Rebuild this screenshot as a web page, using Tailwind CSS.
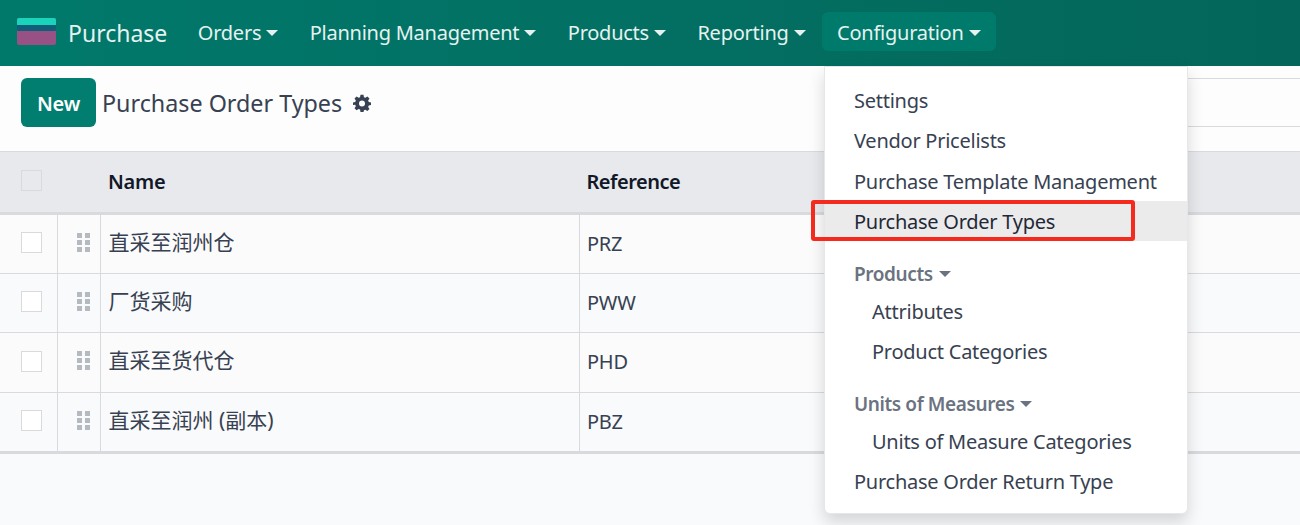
<!DOCTYPE html>
<html lang="en">
<head>
  <meta charset="UTF-8" />
  <title>Purchase Order Types</title>
  <script src="https://cdn.jsdelivr.net/npm/@tailwindcss/browser@4"></script>
</head>
<body class="relative h-[525px] w-[1300px] overflow-hidden bg-[#f9fafb] font-['Noto_Sans','Noto_Sans_CJK_SC',sans-serif] text-[20px] tracking-[-0.25px] text-[#374151]">
  <!-- Navbar -->
  <nav class="flex h-[66px] items-center gap-[1.5px] bg-gradient-to-r from-[#00796b] to-[#04665a] pl-[17px] text-[#e6f2f0]">
    <svg class="mb-[4px] mr-[10.5px] h-[28px] w-[39px]" viewBox="0 0 40 28" preserveAspectRatio="none">
      <path d="M0 3a2 2 0 0 1 2-2h36a2 2 0 0 1 2 2v23a2 2 0 0 1-2 2H2a2 2 0 0 1-2-2z" fill="#985184" />
      <path d="M0 6h40v7a1 1 0 0 1-1 1H1a1 1 0 0 1-1-1z" fill="#0f5f78" />
      <path d="M0 3a2 2 0 0 1 2-2h36a2 2 0 0 1 2 2v5H0z" fill="#1ad3bb" />
    </svg>
    <span class="mr-[14px] text-[23px] tracking-normal">Purchase</span>
    <a class="mb-[3px] flex h-[39px] items-center px-[15px] pt-[3px]">Orders<span class="ml-[5px] border-x-[6px] border-t-[6px] border-x-transparent border-t-current"></span></a>
    <a class="mb-[3px] flex h-[39px] items-center px-[15px] pt-[3px]">Planning Management<span class="ml-[5px] border-x-[6px] border-t-[6px] border-x-transparent border-t-current"></span></a>
    <a class="mb-[3px] flex h-[39px] items-center px-[15px] pt-[3px]">Products<span class="ml-[5px] border-x-[6px] border-t-[6px] border-x-transparent border-t-current"></span></a>
    <a class="mb-[3px] flex h-[39px] items-center px-[15px] pt-[3px]">Reporting<span class="ml-[5px] border-x-[6px] border-t-[6px] border-x-transparent border-t-current"></span></a>
    <a class="mb-[3px] flex h-[39px] items-center rounded-[6px] bg-[#007a6b] px-[15px] pt-[3px]">Configuration<span class="ml-[5px] border-x-[6px] border-t-[6px] border-x-transparent border-t-current"></span></a>
  </nav>

  <!-- Control panel -->
  <div class="flex h-[86px] border-b border-[#d8dadd] bg-[#fdfdfd]">
    <div class="flex items-start pl-[21px] pt-[12px]">
      <button class="h-[49px] w-[75px] rounded-[6px] bg-[#017e6f] pt-[2px] text-[20px] font-semibold text-white">New</button>
      <span class="ml-[6px] mt-[9px] text-[23.3px] leading-[32px] tracking-normal">Purchase Order Types</span>
      <svg class="ml-[11px] mt-[16px] h-[18px] w-[18px]" viewBox="0 0 24 24" fill="#374151">
        <path fill-rule="evenodd" d="M10 1h4l.6 3.200 1.900.8 2.700-1.800 2.800 2.800-1.800 2.700.8 1.900L24 11.200v3.600l-3 .6-.8 1.900 1.800 2.700-2.800 2.800-2.700-1.800-1.900.8L14 24h-4l-.6-3.200-1.900-.8-2.700 1.800L2 19l1.800-2.700-.8-1.900L0 14.800v-3.600l3-.6.8-1.900L2 6l2.800-2.800 2.700 1.800 1.900-.8zM12 8.500a4 4 0 1 0 0 8 4 4 0 0 0 0-8z" />
      </svg>
    </div>
    <div class="ml-auto mt-[12px] h-[49px] w-[113px] border-y border-[#d8dadd]"></div>
  </div>

  <!-- List -->
  <table class="w-full table-fixed border-collapse">
    <colgroup>
      <col class="w-[57px]" />
      <col class="w-[43px]" />
      <col class="w-[479px]" />
      <col />
    </colgroup>
    <thead>
      <tr class="h-[61px] border-b-[3px] border-[#d8dadd] bg-[#e7e9ed] text-left text-[#111827]">
        <th class="pl-[21px]"><span class="mb-[2px] block h-[21px] w-[21px] border border-[#d8dadd]"></span></th>
        <th></th>
        <th class="pl-[8px] font-semibold">Name</th>
        <th class="pl-[7.500px] font-semibold tracking-[-0.5px]">Reference</th>
      </tr>
    </thead>
    <tbody>
      <tr class="h-[60px] border-b border-[#d8dadd] bg-[#fbfbfc]">
        <td class="border-r border-[#d8dadd] pl-[21px]"><span class="mb-[2px] block h-[21px] w-[21px] border border-[#d8dadd] bg-white"></span></td>
        <td class="border-r border-[#d8dadd]"><div class="mb-[3px] ml-[19px] grid w-[13px] grid-cols-2 gap-x-[3px] gap-y-[2px]"><i class="h-[5px] bg-[#b5bac0]"></i><i class="h-[5px] bg-[#b5bac0]"></i><i class="h-[5px] bg-[#b5bac0]"></i><i class="h-[5px] bg-[#b5bac0]"></i><i class="h-[5px] bg-[#b5bac0]"></i><i class="h-[5px] bg-[#b5bac0]"></i></div></td>
        <td class="border-r border-[#d8dadd] pb-[2px] pl-[8px] text-[21px] tracking-normal">直采至润州仓</td>
        <td class="pl-[7.500px]">PRZ</td>
      </tr>
      <tr class="h-[59px] border-b border-[#d8dadd] bg-[#f9fafb]">
        <td class="border-r border-[#d8dadd] pl-[21px]"><span class="mb-[2px] block h-[21px] w-[21px] border border-[#d8dadd] bg-white"></span></td>
        <td class="border-r border-[#d8dadd]"><div class="mb-[3px] ml-[19px] grid w-[13px] grid-cols-2 gap-x-[3px] gap-y-[2px]"><i class="h-[5px] bg-[#b5bac0]"></i><i class="h-[5px] bg-[#b5bac0]"></i><i class="h-[5px] bg-[#b5bac0]"></i><i class="h-[5px] bg-[#b5bac0]"></i><i class="h-[5px] bg-[#b5bac0]"></i><i class="h-[5px] bg-[#b5bac0]"></i></div></td>
        <td class="border-r border-[#d8dadd] pb-[2px] pl-[8px] text-[21px] tracking-normal">厂货采购</td>
        <td class="pl-[7.500px]">PWW</td>
      </tr>
      <tr class="h-[60px] border-b border-[#d8dadd] bg-[#fbfbfc]">
        <td class="border-r border-[#d8dadd] pl-[21px]"><span class="mb-[2px] block h-[21px] w-[21px] border border-[#d8dadd] bg-white"></span></td>
        <td class="border-r border-[#d8dadd]"><div class="mb-[3px] ml-[19px] grid w-[13px] grid-cols-2 gap-x-[3px] gap-y-[2px]"><i class="h-[5px] bg-[#b5bac0]"></i><i class="h-[5px] bg-[#b5bac0]"></i><i class="h-[5px] bg-[#b5bac0]"></i><i class="h-[5px] bg-[#b5bac0]"></i><i class="h-[5px] bg-[#b5bac0]"></i><i class="h-[5px] bg-[#b5bac0]"></i></div></td>
        <td class="border-r border-[#d8dadd] pb-[2px] pl-[8px] text-[21px] tracking-normal">直采至货代仓</td>
        <td class="pl-[7.500px]">PHD</td>
      </tr>
      <tr class="h-[60px] border-b-[3px] border-[#d8dadd] bg-[#f9fafb]">
        <td class="border-r border-[#d8dadd] pl-[21px]"><span class="mb-[2px] block h-[21px] w-[21px] border border-[#d8dadd] bg-white"></span></td>
        <td class="border-r border-[#d8dadd]"><div class="mb-[3px] ml-[19px] grid w-[13px] grid-cols-2 gap-x-[3px] gap-y-[2px]"><i class="h-[5px] bg-[#b5bac0]"></i><i class="h-[5px] bg-[#b5bac0]"></i><i class="h-[5px] bg-[#b5bac0]"></i><i class="h-[5px] bg-[#b5bac0]"></i><i class="h-[5px] bg-[#b5bac0]"></i><i class="h-[5px] bg-[#b5bac0]"></i></div></td>
        <td class="border-r border-[#d8dadd] pb-[2px] pl-[8px] text-[21px] tracking-normal">直采至润州 (副本)</td>
        <td class="pl-[7.500px]">PBZ</td>
      </tr>
    </tbody>
  </table>

  <!-- Dropdown menu -->
  <div class="absolute left-[824px] top-[66px] w-[364px] rounded-b-[6px] border border-[#e5e7eb] bg-white pb-[10px] pt-[13px] leading-[28px] shadow-[0_8px_16px_rgba(0,0,0,0.15)]">
    <a class="block h-[40px] pl-[29px] pt-[7px]">Settings</a>
    <a class="block h-[40px] pl-[29px] pt-[7px]">Vendor Pricelists</a>
    <a class="block h-[41px] pl-[29px] pt-[8px]">Purchase Template Management</a>
    <a class="block h-[40px] bg-[#ebebeb] pl-[29px] pt-[7px] text-[#1f2937]">Purchase Order Types</a>
    <div class="mb-[5px] mt-[19px] flex h-[28px] items-center pl-[29px] text-[19px] font-semibold tracking-[-0.4px] text-[#6b7280]">Products<span class="ml-[6px] border-x-[6px] border-t-[6px] border-x-transparent border-t-current"></span></div>
    <a class="block h-[40px] pl-[47px] pt-[5px]">Attributes</a>
    <a class="block h-[40px] pl-[47px] pt-[5px]">Product Categories</a>
    <div class="mb-[5px] mt-[17px] flex h-[28px] items-center pl-[29px] text-[19px] font-semibold tracking-[-0.4px] text-[#6b7280]">Units of Measures<span class="ml-[6px] border-x-[6px] border-t-[6px] border-x-transparent border-t-current"></span></div>
    <a class="block h-[40px] pl-[47px] pt-[5px]">Units of Measure Categories</a>
    <a class="block h-[40px] pl-[29px] pt-[5px]">Purchase Order Return Type</a>
  </div>

  <!-- Red annotation box -->
  <div class="absolute left-[811px] top-[200px] h-[41px] w-[324px] rounded-[3px] border-[4px] border-[#f52a1f]"></div>
</body>
</html>
